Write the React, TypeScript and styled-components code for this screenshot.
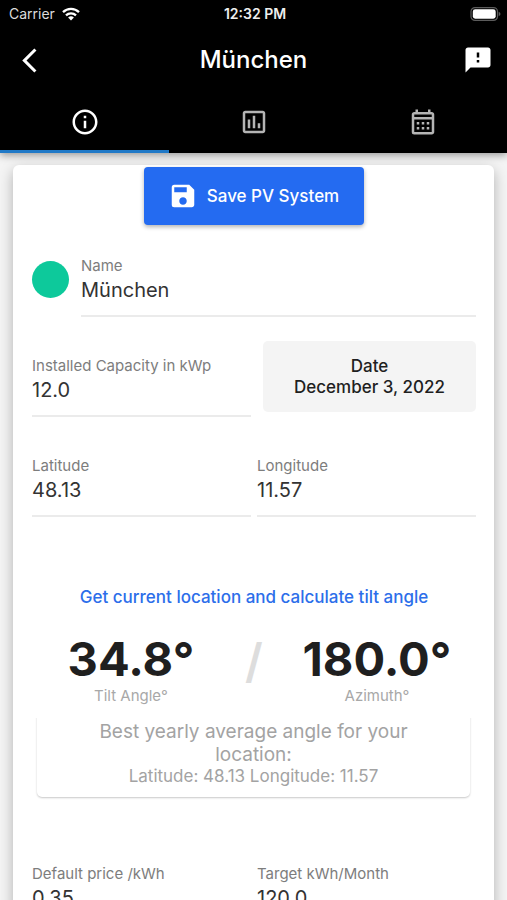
import React, { useId, useState } from 'react';
import styled, { createGlobalStyle } from 'styled-components';
import {
  MdArrowBackIosNew,
  MdFeedback,
  MdOutlineAssessment,
  MdOutlineCalendarMonth,
  MdOutlineInfo,
  MdSave,
} from 'react-icons/md';

const GlobalStyle = createGlobalStyle`
  *, *::before, *::after { box-sizing: border-box; }
  body {
    margin: 0;
    background: #f4f4f4;
    color: #1f1f1f;
    font-family: Inter, 'Liberation Sans', sans-serif;
  }
  button, input { font: inherit; color: inherit; }
  button { border: 0; padding: 0; background: none; cursor: pointer; }
`;

const Screen = styled.div`
  display: flex;
  flex-direction: column;
  height: 100vh;
  overflow: hidden;
`;

const Header = styled.header`
  position: relative;
  z-index: 1;
  flex: none;
  background: #000;
  color: #fff;
  box-shadow: 0 2px 8px rgba(0, 0, 0, 0.4);
`;

const StatusBar = styled.div`
  display: grid;
  grid-template-columns: 1fr auto 1fr;
  align-items: center;
  height: 28px;
  padding: 0 6px 0 9px;
  font-size: 14px;
  line-height: 20px;
`;

const Carrier = styled.span`
  display: flex;
  align-items: center;
  gap: 7px;
  color: #dcdcdc;
`;

const Clock = styled.time`
  font-weight: 600;
  color: #eee;
`;

const BatterySlot = styled.span`
  display: flex;
  justify-content: flex-end;
`;

const AppBar = styled.div`
  display: grid;
  grid-template-columns: 32px 1fr 32px;
  align-items: center;
  height: 64px;
  padding: 0 13px;
`;

const IconButton = styled.button`
  display: flex;
  align-items: center;
  justify-content: center;
  height: 48px;
`;

const Title = styled.h1`
  margin: 0;
  text-align: center;
  font-size: 24px;
  line-height: 32px;
  font-weight: 500;
`;

const TabBar = styled.div`
  display: grid;
  grid-template-columns: repeat(3, 1fr);
`;

const Tab = styled.button<{ $active: boolean }>`
  display: flex;
  align-items: center;
  justify-content: center;
  height: 61px;
  padding-top: 2px;
  border-bottom: 3px solid ${(p) => (p.$active ? '#2079c7' : '#000')};
  color: ${(p) => (p.$active ? '#fff' : '#b4b4b4')};
`;

const Content = styled.main`
  flex: 1;
  min-height: 0;
  overflow-y: auto;
  scrollbar-width: none;
  padding: 12px 13px;
`;

const Card = styled.form`
  display: flex;
  flex-direction: column;
  padding: 2px 18px 40px 19px;
  border-radius: 6px;
  background: #fff;
  box-shadow: 0 5px 14px rgba(0, 0, 0, 0.28);
`;

const SaveButton = styled.button`
  display: flex;
  align-items: center;
  align-self: center;
  gap: 9px;
  height: 58px;
  padding: 0 25px 0 24px;
  border-radius: 4px;
  background: #246bf1;
  color: #fff;
  font-size: 17px;
  font-weight: 500;
  box-shadow: 0 2px 4px rgba(0, 0, 0, 0.3);
`;

const NameRow = styled.div`
  display: flex;
  align-items: center;
  gap: 12px;
  margin-top: 31px;
`;

const ColorSwatch = styled.button`
  flex: none;
  width: 37px;
  height: 37px;
  margin-bottom: 14px;
  border-radius: 50%;
  background: #0dc99b;
`;

const FieldRow = styled.div<{ $gapAbove: number }>`
  display: grid;
  grid-template-columns: 1fr 1fr;
  align-items: end;
  gap: 6px;
  margin-top: ${(p) => p.$gapAbove}px;
`;

const FieldBox = styled.div`
  display: flex;
  flex-direction: column;
  flex: 1;
  min-width: 0;
`;

const FieldLabel = styled.label`
  color: #7d7d7d;
  font-size: 15px;
  line-height: 20px;
`;

const FieldInput = styled.input`
  width: 100%;
  height: 41px;
  padding: 0 0 11px;
  border: 0;
  border-bottom: 2px solid #ebebeb;
  border-radius: 0;
  outline: 0;
  background: none;
  color: #333;
  font-size: 20px;
`;

const DateButton = styled.button`
  height: 71px;
  margin: 0 0 5px 6px;
  border-radius: 5px;
  background: #f4f4f4;
  font-size: 17px;
  line-height: 21px;
  font-weight: 500;
`;

const DateLine = styled.span`
  display: block;
`;

const LocationButton = styled.button`
  align-self: center;
  margin-top: 65px;
  color: #2c6eea;
  font-size: 17px;
  line-height: 30px;
  font-weight: 500;
`;

const Angles = styled.div`
  display: grid;
  grid-template-columns: 1fr 48px 1fr;
  margin-top: 20px;
  text-align: center;
`;

const AngleValue = styled.div`
  font-size: 47px;
  line-height: 54px;
  font-weight: 700;
`;

const AngleCaption = styled.div`
  color: #a8a8a8;
  font-size: 15px;
  line-height: 20px;
`;

const Divider = styled.div`
  color: #ddd;
  font-size: 47px;
  line-height: 58px;
  font-weight: 600;
`;

const Hint = styled.section`
  margin: 4px 6px 0 5px;
  padding: 10px 24px;
  border-radius: 5px;
  color: #a3a3a3;
  text-align: center;
  box-shadow: 0 1px 2px rgba(0, 0, 0, 0.22);
  clip-path: inset(8px -4px -4px);
`;

const HintTitle = styled.p`
  margin: 0;
  font-size: 19px;
  line-height: 23px;
`;

const HintText = styled.p`
  margin: 0;
  font-size: 17px;
  line-height: 21px;
`;

function WifiIcon() {
  return (
    <svg width="18" height="14" viewBox="0 0 18 14" aria-hidden="true">
      <g fill="none" stroke="#fff" strokeWidth="2.3">
        <path d="M1 5.1a11.5 11.5 0 0 1 16 0" />
        <path d="M4 8.3a7.2 7.2 0 0 1 10 0" />
      </g>
      <path d="M9 13.6 6.1 10.6a4.1 4.1 0 0 1 5.8 0z" fill="#fff" />
    </svg>
  );
}

function BatteryIcon() {
  return (
    <svg width="31" height="14" viewBox="0 0 31 14" aria-label="Battery full">
      <rect x="1" y="0.6" width="26.5" height="12.8" rx="4" fill="none" stroke="#5c5c5c" strokeWidth="1.2" />
      <rect x="2.8" y="2.3" width="22.9" height="9.4" rx="2.4" fill="#fff" />
      <path d="M28.7 4.8q1.8.7 1.8 2.2t-1.8 2.2z" fill="#5c5c5c" />
    </svg>
  );
}

function Field({ label, initial }: { label: string; initial: string }) {
  const id = useId();
  const [value, setValue] = useState(initial);
  return (
    <FieldBox>
      <FieldLabel htmlFor={id}>{label}</FieldLabel>
      <FieldInput id={id} value={value} onChange={(e) => setValue(e.target.value)} />
    </FieldBox>
  );
}

const tabs = [
  { name: 'Details', Icon: MdOutlineInfo },
  { name: 'Statistics', Icon: MdOutlineAssessment },
  { name: 'Calendar', Icon: MdOutlineCalendarMonth },
];

export default function App() {
  const [active, setActive] = useState(0);
  return (
    <Screen>
      <GlobalStyle />
      <Header>
        <StatusBar>
          <Carrier>
            Carrier
            <WifiIcon />
          </Carrier>
          <Clock>12:32 PM</Clock>
          <BatterySlot>
            <BatteryIcon />
          </BatterySlot>
        </StatusBar>
        <AppBar>
          <IconButton aria-label="Back">
            <MdArrowBackIosNew size={29} />
          </IconButton>
          <Title>München</Title>
          <IconButton aria-label="Feedback">
            <MdFeedback size={30} />
          </IconButton>
        </AppBar>
        <TabBar role="tablist">
          {tabs.map(({ name, Icon }, i) => (
            <Tab
              key={name}
              role="tab"
              aria-label={name}
              aria-selected={i === active}
              $active={i === active}
              onClick={() => setActive(i)}
            >
              <Icon size={30} />
            </Tab>
          ))}
        </TabBar>
      </Header>
      <Content>
        <Card onSubmit={(e) => e.preventDefault()}>
          <SaveButton type="submit">
            <MdSave size={30} />
            Save PV System
          </SaveButton>
          <NameRow>
            <ColorSwatch type="button" aria-label="Colour" />
            <Field label="Name" initial="München" />
          </NameRow>
          <FieldRow $gapAbove={24}>
            <Field label="Installed Capacity in kWp" initial="12.0" />
            <DateButton type="button">
              <DateLine>Date</DateLine>
              <DateLine>December 3, 2022</DateLine>
            </DateButton>
          </FieldRow>
          <FieldRow $gapAbove={39}>
            <Field label="Latitude" initial="48.13" />
            <Field label="Longitude" initial="11.57" />
          </FieldRow>
          <LocationButton type="button">Get current location and calculate tilt angle</LocationButton>
          <Angles>
            <div>
              <AngleValue>34.8°</AngleValue>
              <AngleCaption>Tilt Angle°</AngleCaption>
            </div>
            <Divider>/</Divider>
            <div>
              <AngleValue>180.0°</AngleValue>
              <AngleCaption>Azimuth°</AngleCaption>
            </div>
          </Angles>
          <Hint>
            <HintTitle>Best yearly average angle for your location:</HintTitle>
            <HintText>Latitude: 48.13 Longitude: 11.57</HintText>
          </Hint>
          <FieldRow $gapAbove={67}>
            <Field label="Default price /kWh" initial="0.35" />
            <Field label="Target kWh/Month" initial="120.0" />
          </FieldRow>
        </Card>
      </Content>
    </Screen>
  );
}
